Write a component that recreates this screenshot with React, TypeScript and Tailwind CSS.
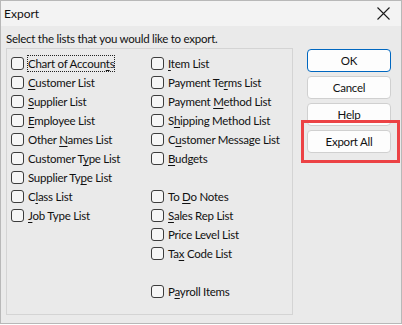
import React from "react";

type Item = { pre: string; u: string; post: string; focus?: boolean } | null;

const col1: Item[] = [
  { pre: "Chart of Accoun", u: "t", post: "s", focus: true },
  { pre: "", u: "C", post: "ustomer List" },
  { pre: "", u: "S", post: "upplier List" },
  { pre: "", u: "E", post: "mployee List" },
  { pre: "Other ", u: "N", post: "ames List" },
  { pre: "Customer T", u: "y", post: "pe List" },
  { pre: "Supplier Ty", u: "p", post: "e List" },
  { pre: "C", u: "l", post: "ass List" },
  { pre: "", u: "J", post: "ob Type List" },
];

const col2: Item[] = [
  { pre: "", u: "I", post: "tem List" },
  { pre: "Payment Te", u: "r", post: "ms List" },
  { pre: "Payment ", u: "M", post: "ethod List" },
  { pre: "S", u: "h", post: "ipping Method List" },
  { pre: "C", u: "u", post: "stomer Message List" },
  { pre: "", u: "B", post: "udgets" },
  null,
  { pre: "To ", u: "D", post: "o Notes" },
  { pre: "", u: "S", post: "ales Rep List" },
  { pre: "Price Level List", u: "", post: "" },
  { pre: "Ta", u: "x", post: " Code List" },
  null,
  { pre: "P", u: "a", post: "yroll Items" },
];

function Row({ item }: { item: Item }) {
  if (!item) return <div className="h-[19px]" />;
  return (
    <div className="flex h-[19px] items-center">
      <div className="h-[13px] w-[13px] shrink-0 rounded-[3px] border border-[#3c3c3c] bg-[#f6f6f6]" />
      <div
        className={
          "ml-[3px] flex h-[17px] items-center whitespace-nowrap px-[1px] " +
          (item.focus ? "outline-1 outline-dotted outline-[#222] -outline-offset-1" : "")
        }
      >
        <span>
          {item.pre}
          {item.u && <span className="underline decoration-1 underline-offset-[2px]">{item.u}</span>}
          {item.post}
        </span>
      </div>
    </div>
  );
}

function Btn({ label, primary }: { label: string; primary?: boolean }) {
  return (
    <div
      className={
        "flex h-[23px] w-[84px] items-center justify-center rounded-[4px] border bg-[#fdfdfd] " +
        (primary ? "border-[#0067c0]" : "border-[#d0d0d0]")
      }
    >
      {label}
    </div>
  );
}

export default function App() {
  return (
    <div
      className="h-[325px] w-[402px] bg-white text-[11.5px] leading-[16px] tracking-[-0.25px] text-[#111]"
      style={{ fontFamily: 'Lato, "Noto Sans", sans-serif' }}
    >
      <div className="flex h-[324px] w-[402px] flex-col border border-[#b8b8b8] bg-[#eaeaea]">
        <div className="flex h-[25px] shrink-0 items-center justify-between bg-[#f3f3f3] pl-[3px] pr-[10px]">
          <span className="text-[12px] tracking-normal">Export</span>
          <svg width="13" height="13" viewBox="0 0 13 13" className="mr-[1px]">
            <path d="M0.5 0.5 L12.5 12.5 M12.5 0.5 L0.5 12.5" stroke="#1a1a1a" strokeWidth="1.1" fill="none" />
          </svg>
        </div>
        <div className="flex flex-1 flex-col pl-[5px] pt-[5px]">
          <div className="h-[16px]">Select the lists that you would like to export.</div>
          <div className="mt-[1px] flex">
            <div className="flex h-[267px] w-[287px] shrink-0 border border-[#d4d4d4] pl-[4px] pt-[5px]">
              <div className="flex w-[140px] shrink-0 flex-col">
                {col1.map((it, i) => (
                  <Row key={i} item={it} />
                ))}
              </div>
              <div className="flex flex-col">
                {col2.map((it, i) => (
                  <Row key={i} item={it} />
                ))}
              </div>
            </div>
            <div className="ml-[14px] flex flex-col gap-[4px] pt-[1px]">
              <Btn label="OK" primary />
              <Btn label="Cancel" />
              <Btn label="Help" />
              <div className="relative">
                <Btn label="Export All" />
                <div className="pointer-events-none absolute left-[-6px] top-[-10px] h-[43px] w-[99px] border-[3px] border-[#ec4245]" />
              </div>
            </div>
          </div>
        </div>
      </div>
    </div>
  );
}
